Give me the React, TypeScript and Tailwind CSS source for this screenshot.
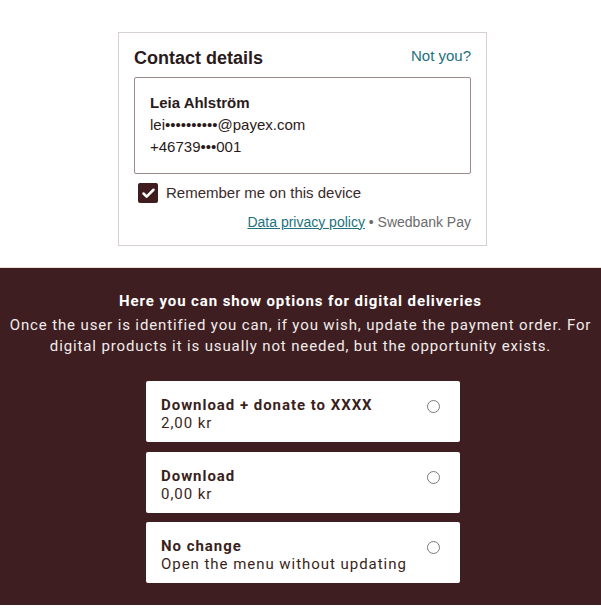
import { Check } from "lucide-react";

const options = [
  { title: "Download + donate to XXXX", sub: "2,00 kr" },
  { title: "Download", sub: "0,00 kr" },
  { title: "No change", sub: "Open the menu without updating" },
];

export default function App() {
  return (
    <div className="w-[601px] h-[610px] bg-white">
      <div className="pt-[32px] h-[268px] border-b border-[#e9e0d8]">
        <div className="ml-[118px] w-[369px] h-[214px] border border-[#d6d0ce] px-[15px] pt-[14px] font-['Liberation_Sans',Arial,sans-serif]">
          <div className="flex justify-between items-start">
            <h2 className="text-[18px] font-bold text-[#2b1a1a] leading-[22px]">Contact details</h2>
            <a className="text-[15px] text-[#22727c] leading-[18px]">Not you?</a>
          </div>
          <div className="mt-[8px] h-[97px] border border-[#9c8c8c] rounded-[2px] px-[15px] pt-[14px] text-[15px] text-[#2b1a1a]">
            <div className="font-bold leading-[22px]">Leia Ahlström</div>
            <div className="leading-[22px]">lei••••••••••@payex.com</div>
            <div className="leading-[22px]">+46739•••001</div>
          </div>
          <label className="mt-[8px] ml-[4px] flex items-center gap-[8px]">
            <span className="w-[20px] h-[20px] rounded-[2px] bg-[#3f1d1f] flex items-center justify-center">
              <Check className="w-[15px] h-[15px] text-white" strokeWidth={4} />
            </span>
            <span className="text-[15px] text-[#3b2a2a]">Remember me on this device</span>
          </label>
          <div className="mt-[7px] text-right text-[14px] text-[#6b6b6b]">
            <a className="text-[#22727c] underline">Data privacy policy</a> • Swedbank Pay
          </div>
        </div>
      </div>
      <div className="h-[337px] bg-[#3e1e20] pt-[23px] font-['Roboto',sans-serif] text-white text-center">
        <div className="text-[15px] font-bold leading-[21px] tracking-[0.06em]">Here you can show options for digital deliveries</div>
        <p className="mt-[3px] text-[15px] leading-[21px] px-[2px] text-[#f2ecec] tracking-[0.058em]">
          Once the user is identified you can, if you wish, update the payment order. For digital products it is usually not needed, but the opportunity exists.
        </p>
        <div className="mt-[24px] ml-[146px] w-[314px] flex flex-col gap-[9.5px] text-left tracking-[0.06em]">
          {options.map((o) => (
            <div key={o.title} className="h-[61px] bg-white rounded-[2px] pl-[15px] pr-[20px] flex items-center justify-between text-[#3b1f20]">
              <div className="leading-[18px] text-[15px] pt-[5px]">
                <div className="font-bold">{o.title}</div>
                <div>{o.sub}</div>
              </div>
              <span className="self-start mt-[19px] w-[13px] h-[13px] rounded-full border border-[#7a7a7a]" />
            </div>
          ))}
        </div>
      </div>
    </div>
  );
}
